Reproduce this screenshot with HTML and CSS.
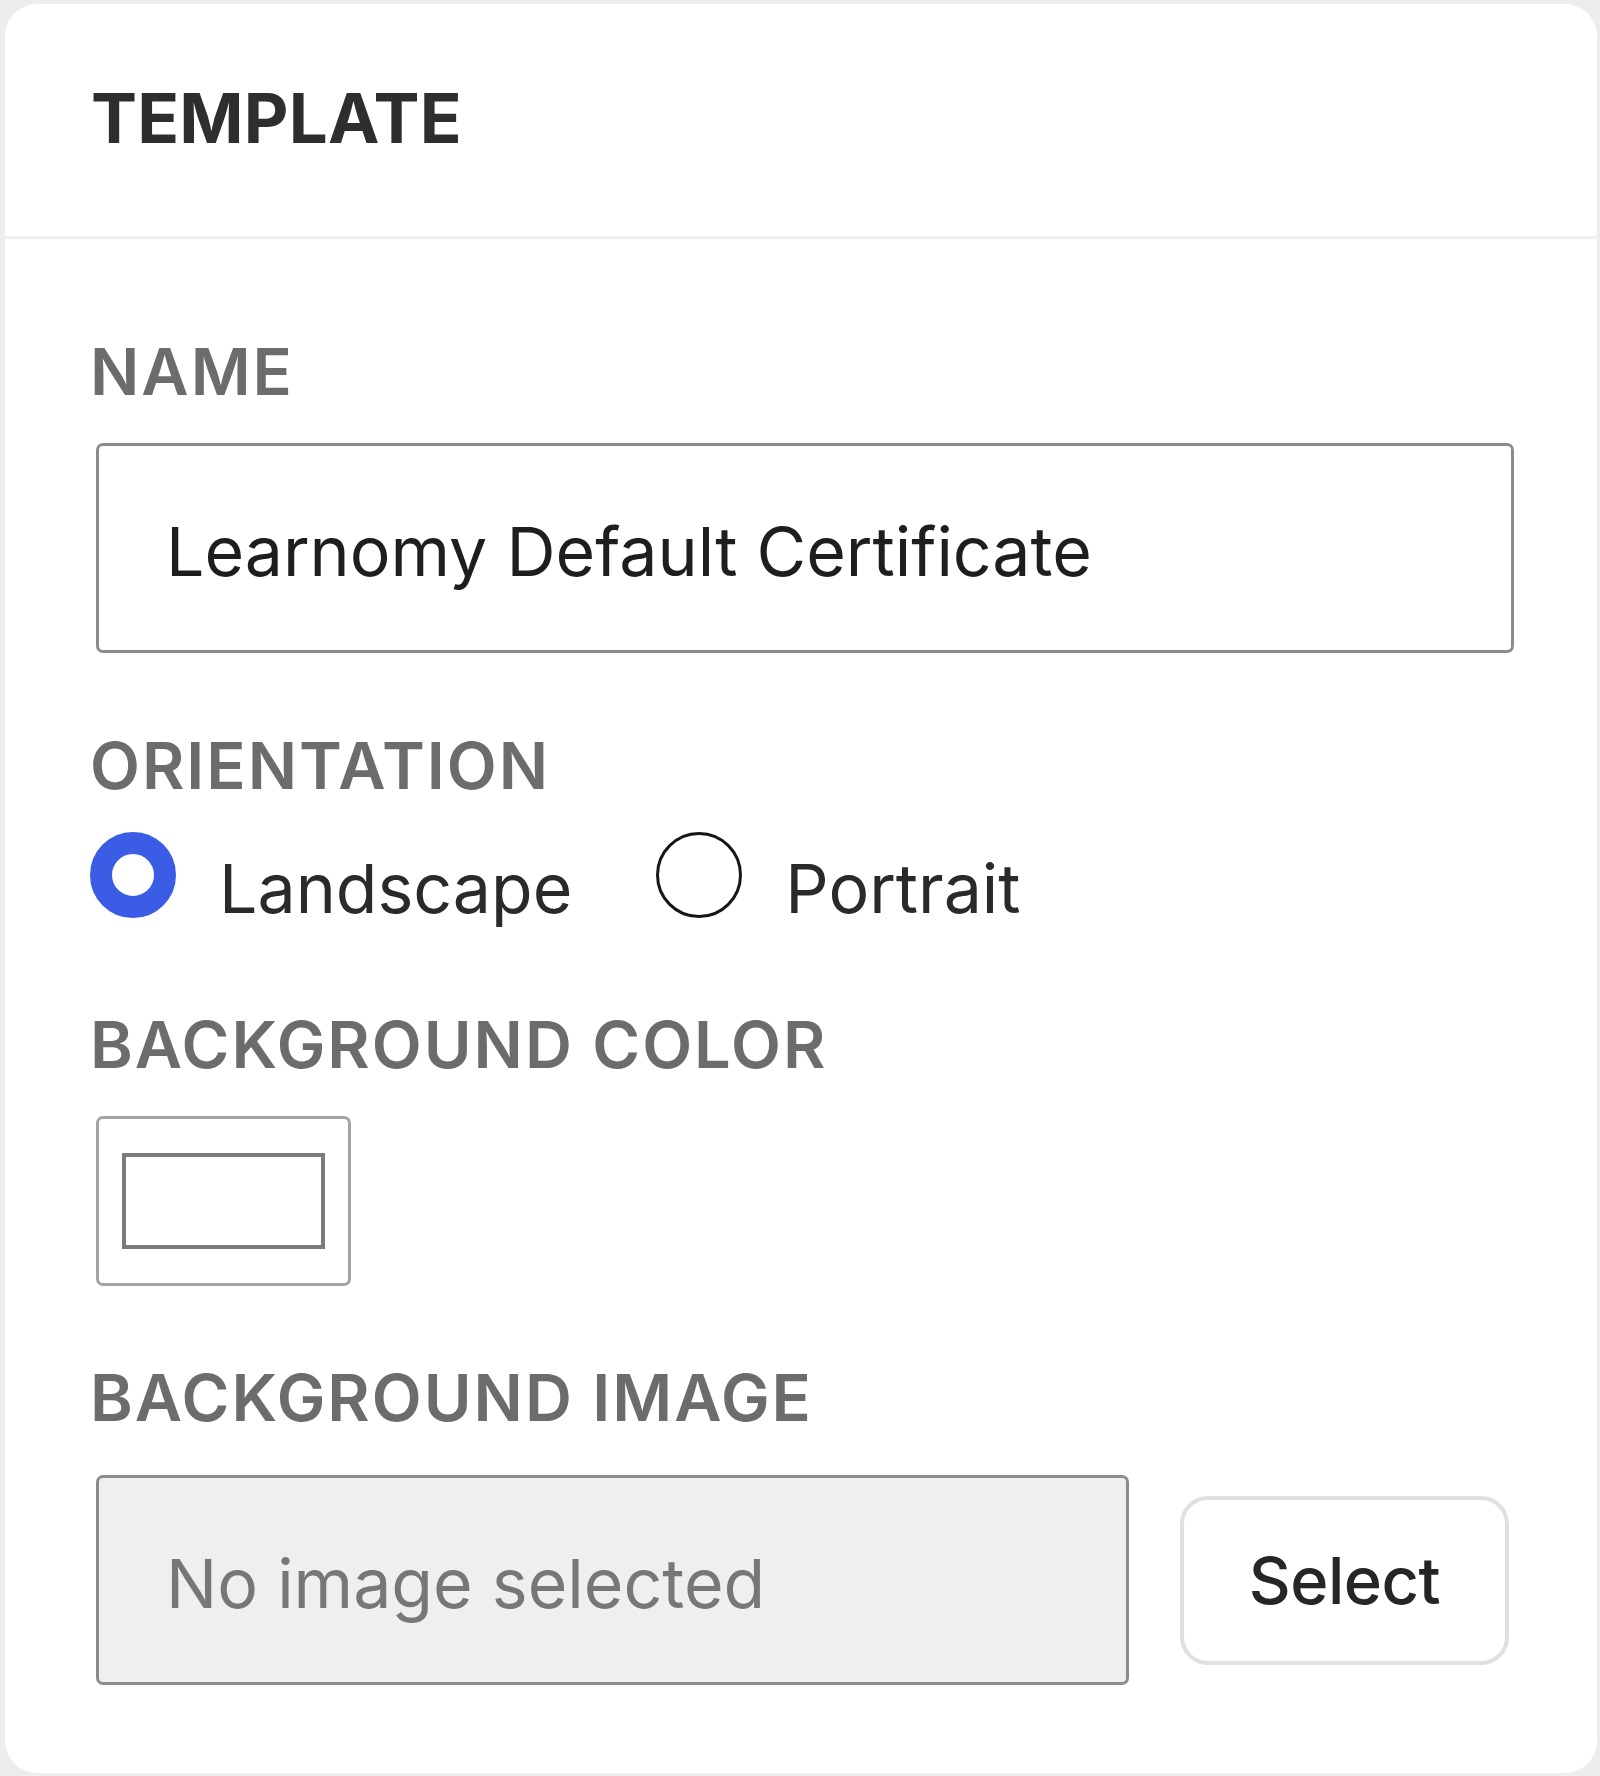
FILE: index.html
```html
<!DOCTYPE html>
<html lang="en">
<head>
<meta charset="utf-8">
<title>Template</title>
<link rel="stylesheet" href="styles.css">
</head>
<body>
<div class="card">
  <div class="card-header">
    <h2 class="card-title">TEMPLATE</h2>
  </div>
  <div class="card-body">
    <div class="field field-name">
      <label class="field-label" for="tpl-name">NAME</label>
      <input class="text-input" id="tpl-name" type="text" value="Learnomy Default Certificate">
    </div>
    <div class="field field-orientation">
      <div class="field-label">ORIENTATION</div>
      <div class="radio-row">
        <label class="radio-option">
          <input class="radio" type="radio" name="orientation" checked>
          <span class="radio-text">Landscape</span>
        </label>
        <label class="radio-option">
          <input class="radio" type="radio" name="orientation">
          <span class="radio-text">Portrait</span>
        </label>
      </div>
    </div>
    <div class="field field-color">
      <div class="field-label">BACKGROUND COLOR</div>
      <div class="swatch"><div class="swatch-inner"></div></div>
    </div>
    <div class="field field-image">
      <div class="field-label">BACKGROUND IMAGE</div>
      <div class="image-row">
        <input class="text-input image-input" type="text" placeholder="No image selected" readonly>
        <button class="select-btn" type="button">Select</button>
      </div>
    </div>
  </div>
</div>
</body>
</html>
```
FILE: styles.css
```css
* {
  box-sizing: border-box;
}

html, body {
  margin: 0;
  padding: 0;
  background: #ededed;
}

body {
  font-family: Inter, "Noto Sans", "Liberation Sans", sans-serif;
  padding: 4px 3px 4px 5px;
}

.card {
  background: #ffffff;
  border-radius: 32px;
  overflow: hidden;
}

.card-header {
  padding: 80px 88px 83px 86px;
  border-bottom: 3px solid #efefef;
}

.card-title {
  margin: 0;
  font-size: 69px;
  line-height: 1;
  font-weight: 700;
  color: #2e2e2c;
  letter-spacing: 0.2px;
}

.card-body {
  padding: 100px 83px 88px 91px;
  display: flex;
  flex-direction: column;
}

.field-label {
  display: block;
  font-size: 65px;
  line-height: 1;
  font-weight: 600;
  color: #6c6c6c;
  letter-spacing: 2px;
  margin-left: -6px;
}

.field-name .field-label {
  margin-bottom: 39px;
}

.field-orientation {
  margin-top: 80px;
}

.field-orientation .field-label {
  margin-bottom: 34px;
}

.field-color {
  margin-top: 90px;
}

.field-color .field-label {
  margin-bottom: 39px;
}

.field-image {
  margin-top: 79px;
}

.field-image .field-label {
  margin-bottom: 45px;
}

.text-input {
  display: block;
  width: 100%;
  height: 210px;
  margin: 0;
  padding: 6px 0 0 67px;
  border: 3px solid #8c8c8c;
  border-radius: 7px;
  background: #ffffff;
  font-family: inherit;
  font-size: 68px;
  color: #1e1e1e;
  outline: none;
}

.radio-row {
  display: flex;
  align-items: flex-start;
  gap: 84px;
  margin-left: -6px;
}

.radio-option {
  display: flex;
  align-items: flex-start;
  gap: 43px;
}

.radio {
  appearance: none;
  -webkit-appearance: none;
  margin: 0;
  width: 86px;
  height: 86px;
  border-radius: 50%;
  border: 3px solid #161616;
  background: #ffffff;
  flex: none;
}

.radio:checked {
  border: 22px solid #3b5ce4;
}

.radio-text {
  margin-top: 22px;
  font-size: 68px;
  line-height: 1;
  color: #2a2a2a;
}

.swatch {
  width: 255px;
  height: 170px;
  border: 3px solid #a3a3a3;
  border-radius: 7px;
  padding: 34px 23px;
}

.swatch-inner {
  width: 100%;
  height: 100%;
  border: 4px solid #7b7b7b;
  background: #ffffff;
}

.image-row {
  display: grid;
  grid-template-columns: 1fr 329px;
  column-gap: 51px;
  align-items: center;
  margin-right: 5px;
}

.image-input {
  background: #efefef;
}

.image-input::placeholder {
  color: #777777;
  opacity: 1;
}

.select-btn {
  height: 169px;
  margin: 0;
  padding: 0;
  border: 4px solid #e0e0e0;
  border-radius: 28px;
  background: #ffffff;
  font-family: inherit;
  font-size: 65px;
  font-weight: 500;
  letter-spacing: -0.5px;
  color: #262626;
  cursor: pointer;
}
```
